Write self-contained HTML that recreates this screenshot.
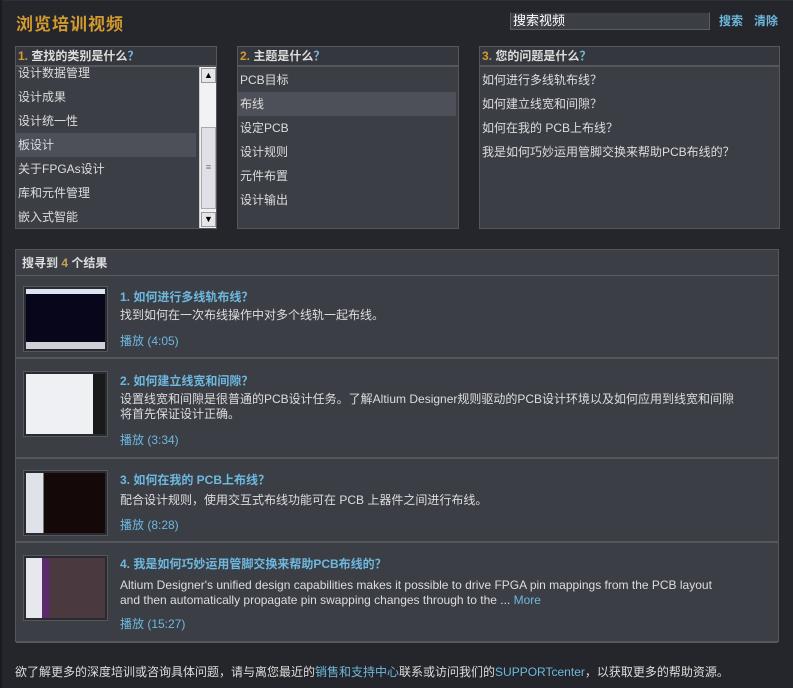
<!DOCTYPE html>
<html><head><meta charset="utf-8"><style>
*{margin:0;padding:0;box-sizing:border-box}
body{width:793px;height:688px;background:#1a1b1e;font-family:"Liberation Sans","Noto Sans CJK SC",sans-serif;font-size:12px;color:#d8d8d8;position:relative;overflow:hidden}
#frame{position:absolute;left:2px;top:0;width:791px;height:688px;background:#25262b;border-top:1px solid #2e2f34}
.a{position:absolute}
.title{left:16px;top:10px;font-size:17px;font-weight:bold;color:#d39a2d;letter-spacing:1px}
.search{left:510px;top:12px;width:200px;height:18px;background:#3c3e46;border:1px solid #5a5c62;border-top-color:#2a2b30;color:#fff;font-size:13px;padding-left:2px;line-height:15px}
.lnk{color:#6db8de;font-weight:bold;font-size:12px}
.panel{background:#3c3e46;border:1px solid #55575d;top:46px;height:183px}
.ph{height:20px;border-bottom:2px solid #55575d;background:#35373e;font-weight:bold;font-size:12px;padding-left:2px;line-height:19px;color:#ddd}
.ph b{color:#d39a2d}
.ph i{font-style:normal;color:#7ab0d8}
.it{height:24px;line-height:24px;padding-left:2px;font-size:12px;color:#ddd;white-space:nowrap}
.sel{background:#4e5059}
.res{left:15px;top:249px;width:764px;height:393px;background:#3c3e46;border:1px solid #55575d}
.rh{height:26px;border-bottom:1px solid #5a5c62;font-weight:bold;padding-left:6px;line-height:26px;color:#ddd}
.row{position:absolute;left:0;width:762px;border-bottom:2px solid #55575d}
.th{position:absolute;left:7px;top:0;width:85px;height:66px;background:#2a2b30;border:1px solid #55575d;padding:2px}
.th div{width:100%;height:100%}
.rt{position:absolute;left:104px;font-weight:bold;color:#6db8de;font-size:12px}
.rd{position:absolute;left:104px;color:#ddd;font-size:12px;line-height:15px;width:620px}
.rp{position:absolute;left:104px;color:#6db8de;font-size:12px}
.foot{left:15px;top:663px;font-size:12px;color:#ddd}
.foot span{color:#6db8de}
.sb{position:absolute;right:0;top:0;width:17px;height:161px;background:#f2f2f4;border-left:1px solid #ccc}
</style></head><body><div id="frame"></div>
<div class="a title">浏览培训视频</div>
<div class="a search">搜索视频</div>
<div class="a lnk" style="left:719px;top:12px">搜索</div>
<div class="a lnk" style="left:754px;top:12px">清除</div>

<div class="a panel" style="left:15px;width:202px">
<div class="ph"><b>1.</b> 查找的类别是什么<i>？</i></div>
<div style="position:relative;height:161px;overflow:hidden">
<div style="position:absolute;top:-6px;left:0;width:182px">
<div class="it">设计数据管理</div><div class="it">设计成果</div><div class="it">设计统一性</div><div class="it sel" style="margin-right:2px">板设计</div><div class="it">关于FPGAs设计</div><div class="it">库和元件管理</div><div class="it">嵌入式智能</div></div>
<div class="sb">
<div style="position:absolute;left:1px;top:1px;width:15px;height:15px;border:1px solid #999;background:#e6e6ea;font-size:9px;text-align:center;line-height:13px;color:#000">▲</div>
<div style="position:absolute;left:1px;top:60px;width:15px;height:82px;border:1px solid #aaa;background:#e0e0e6;text-align:center;line-height:78px;color:#777;font-size:9px">≡</div>
<div style="position:absolute;left:1px;bottom:1px;width:15px;height:15px;border:1px solid #999;background:#e6e6ea;font-size:9px;text-align:center;line-height:13px;color:#000">▼</div>
</div></div></div>

<div class="a panel" style="left:237px;width:222px">
<div class="ph"><b>2.</b> 主题是什么<i>？</i></div>
<div style="padding-top:1px">
<div class="it">PCB目标</div><div class="it sel" style="width:218px">布线</div><div class="it">设定PCB</div><div class="it">设计规则</div><div class="it">元件布置</div><div class="it">设计输出</div></div></div>

<div class="a panel" style="left:479px;width:301px">
<div class="ph"><b>3.</b> 您的问题是什么<i>？</i></div>
<div style="padding-top:1px">
<div class="it">如何进行多线轨布线？</div><div class="it">如何建立线宽和间隙？</div><div class="it">如何在我的 PCB上布线？</div><div class="it">我是如何巧妙运用管脚交换来帮助PCB布线的？</div></div></div>

<div class="a res">
<div class="rh">搜寻到 <span style="color:#c9a24a">4</span> 个结果</div>
<div class="row" style="top:27px;height:82px">
<div class="th" style="top:9px"><div style="background:linear-gradient(#dde4f0 0 8%,#08061a 8% 88%,#cfcfd8 88%)"></div></div>
<div class="rt" style="top:11px">1. 如何进行多线轨布线？</div>
<div class="rd" style="top:31px">找到如何在一次布线操作中对多个线轨一起布线。</div>
<div class="rp" style="top:55px">播放 (4:05)</div></div>
<div class="row" style="top:109px;height:100px">
<div class="th" style="top:12px"><div style="background:linear-gradient(90deg,#eef0f4 0 85%,#1a1a1a 85%)"></div></div>
<div class="rt" style="top:13px">2. 如何建立线宽和间隙？</div>
<div class="rd" style="top:33px">设置线宽和间隙是很普通的PCB设计任务。了解Altium Designer规则驱动的PCB设计环境以及如何应用到线宽和间隙将首先保证设计正确。</div>
<div class="rp" style="top:72px">播放 (3:34)</div></div>
<div class="row" style="top:209px;height:84px">
<div class="th" style="top:11px"><div style="background:linear-gradient(90deg,#e0e2ea 0 22%,#140808 22%)"></div></div>
<div class="rt" style="top:12px">3. 如何在我的 PCB上布线？</div>
<div class="rd" style="top:34px">配合设计规则，使用交互式布线功能可在 PCB 上器件之间进行布线。</div>
<div class="rp" style="top:57px">播放 (8:28)</div></div>
<div class="row" style="top:293px;height:100px">
<div class="th" style="top:12px"><div style="background:linear-gradient(90deg,#e6e8ee 0 20%,#5a2a6a 20% 30%,#4a3a40 30%)"></div></div>
<div class="rt" style="top:12px">4. 我是如何巧妙运用管脚交换来帮助PCB布线的？</div>
<div class="rd" style="top:35px;width:640px">Altium Designer's unified design capabilities makes it possible to drive FPGA pin mappings from the PCB layout<br>and then automatically propagate pin swapping changes through to the ... <span style="color:#6db8de">More</span></div>
<div class="rp" style="top:72px">播放 (15:27)</div></div>
</div>

<div class="a foot">欲了解更多的深度培训或咨询具体问题，请与离您最近的<span>销售和支持中心</span>联系或访问我们的<span>SUPPORTcenter</span>，以获取更多的帮助资源。</div>
</body></html>
